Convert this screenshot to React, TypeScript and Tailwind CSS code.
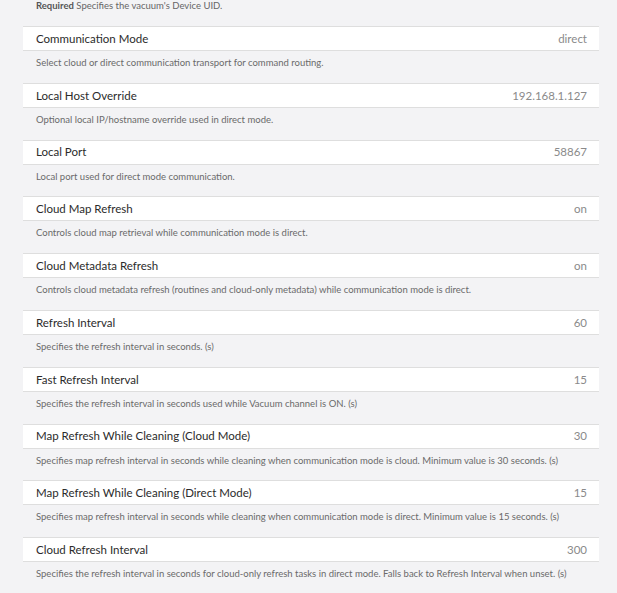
const rows = [
  {
    title: "Communication Mode",
    value: "direct",
    desc: "Select cloud or direct communication transport for command routing.",
  },
  {
    title: "Local Host Override",
    value: "192.168.1.127",
    desc: "Optional local IP/hostname override used in direct mode.",
  },
  {
    title: "Local Port",
    value: "58867",
    desc: "Local port used for direct mode communication.",
  },
  {
    title: "Cloud Map Refresh",
    value: "on",
    desc: "Controls cloud map retrieval while communication mode is direct.",
  },
  {
    title: "Cloud Metadata Refresh",
    value: "on",
    desc: "Controls cloud metadata refresh (routines and cloud-only metadata) while communication mode is direct.",
  },
  {
    title: "Refresh Interval",
    value: "60",
    desc: "Specifies the refresh interval in seconds. (s)",
  },
  {
    title: "Fast Refresh Interval",
    value: "15",
    desc: "Specifies the refresh interval in seconds used while Vacuum channel is ON. (s)",
  },
  {
    title: "Map Refresh While Cleaning (Cloud Mode)",
    value: "30",
    desc: "Specifies map refresh interval in seconds while cleaning when communication mode is cloud. Minimum value is 30 seconds. (s)",
  },
  {
    title: "Map Refresh While Cleaning (Direct Mode)",
    value: "15",
    desc: "Specifies map refresh interval in seconds while cleaning when communication mode is direct. Minimum value is 15 seconds. (s)",
  },
  {
    title: "Cloud Refresh Interval",
    value: "300",
    desc: "Specifies the refresh interval in seconds for cloud-only refresh tasks in direct mode. Falls back to Refresh Interval when unset. (s)",
  },
];

export default function App() {
  return (
    <div className="min-h-[593px] w-[617px] overflow-hidden bg-[#f3f3f5] font-['Lato',sans-serif]">
      <div className="pl-[23px] pr-[18px]">
        <div className="h-[26px] pl-[13px] text-[9.5px] leading-[12px] text-[#666]">
          <span className="font-bold text-[#555]">Required</span> Specifies the vacuum's Device UID.
        </div>
        {rows.map((row) => (
          <div key={row.title} className="h-[56.8px]">
            <div className="flex h-[25px] items-center justify-between border-y border-[#dedede] bg-white pl-[13px] pr-[12px]">
              <span className="text-[11.5px] text-[#2b2b2b]">{row.title}</span>
              <span className="text-[11.5px] text-[#8a8a8a]">{row.value}</span>
            </div>
            <div className="whitespace-nowrap pl-[13px] pt-[6px] text-[9.5px] leading-[12px] text-[#6a6a6a]">
              {row.desc}
            </div>
          </div>
        ))}
      </div>
    </div>
  );
}
